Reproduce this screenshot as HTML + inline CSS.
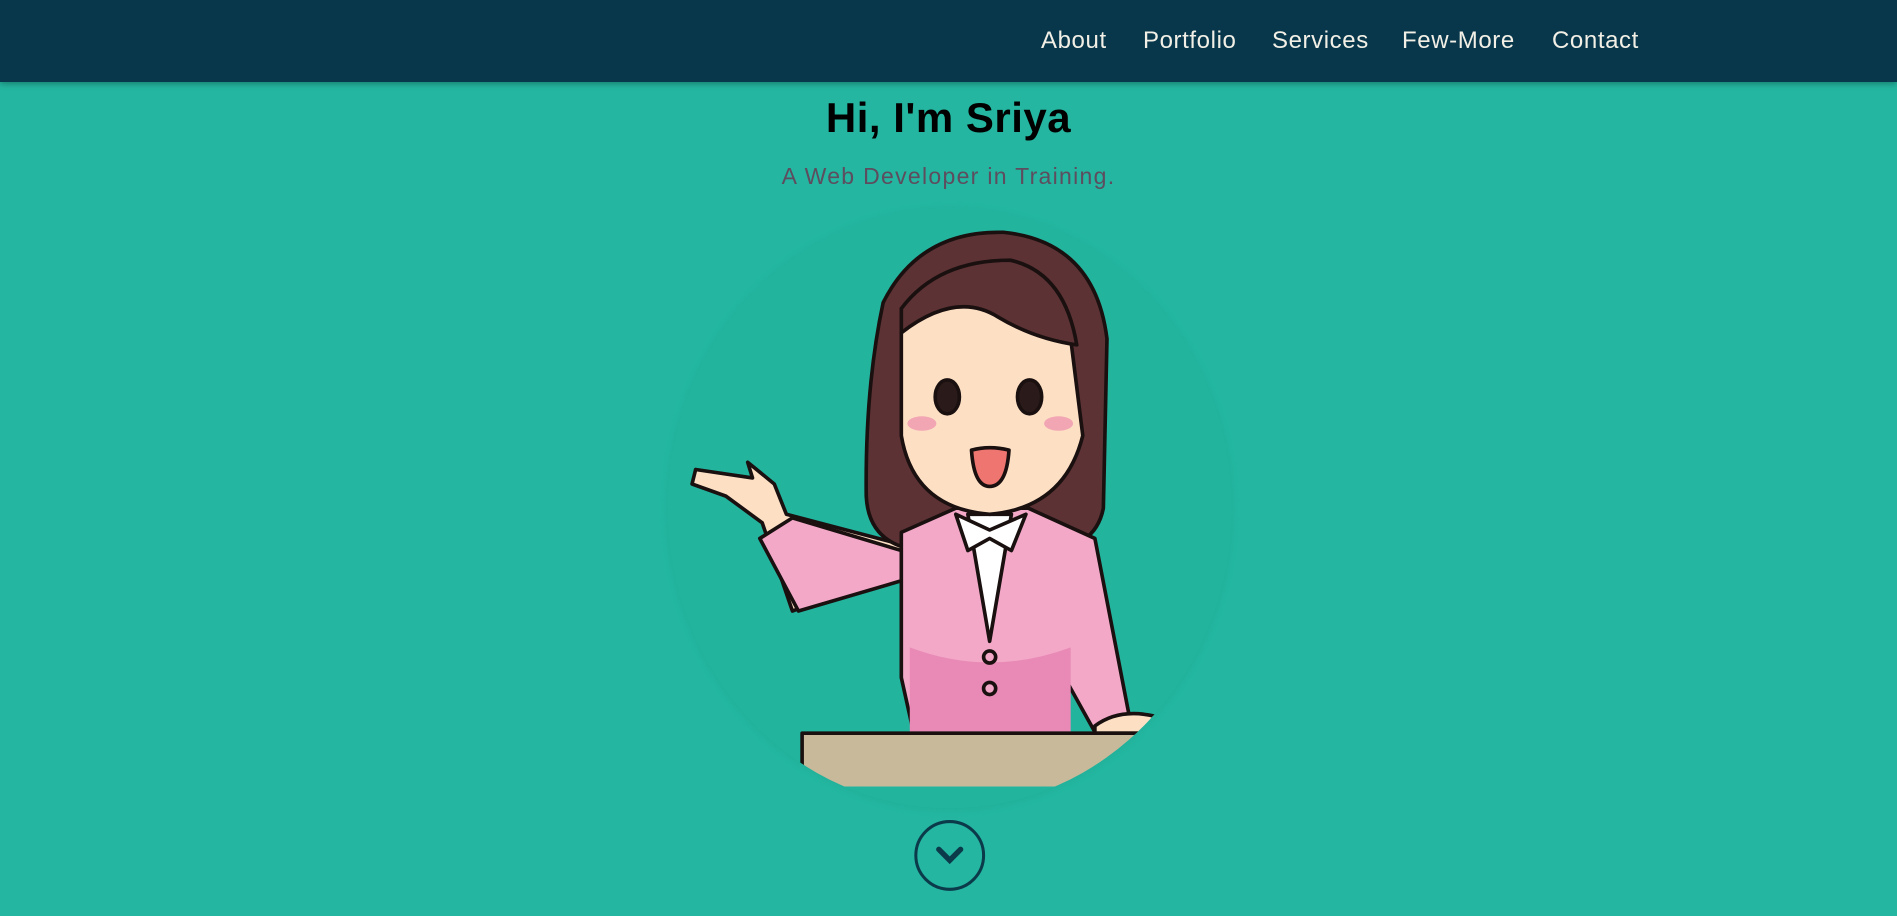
<!DOCTYPE html>
<html><head><meta charset="utf-8"><style>
body{margin:0;width:1897px;height:916px;background:#24b6a0;overflow:hidden;font-family:"Liberation Sans",sans-serif;position:relative}
nav{position:absolute;left:0;top:0;width:1897px;height:82px;background:#08364b;box-shadow:0 2px 6px rgba(0,0,0,.3);z-index:2}
nav a{position:absolute;top:27px;color:#f2f0e6;font-size:24px;letter-spacing:0.6px;text-decoration:none}
h1{position:absolute;top:94px;left:0;width:1897px;text-align:center;margin:0;font-size:42px;font-weight:bold;color:#000;letter-spacing:0.5px}
p{position:absolute;top:163px;left:0;width:1897px;text-align:center;margin:0;font-size:23px;color:#5d4d5e;letter-spacing:1.3px}
svg{position:absolute;left:0;top:0}
</style></head><body>
<svg width="1897" height="916" viewBox="0 0 1568 757">
<defs><clipPath id="c"><ellipse cx="785" cy="420" rx="233" ry="248"/></clipPath>
<clipPath id="r"><rect x="0" y="0" width="1568" height="650"/></clipPath>
<filter id="s"><feGaussianBlur stdDeviation="3"/></filter></defs>
<ellipse cx="785" cy="421" rx="234" ry="249" fill="#1fa993" opacity=".4" filter="url(#s)"/>
<ellipse cx="785" cy="420" rx="233" ry="248" fill="#23b49e"/>
<g clip-path="url(#r)"><g clip-path="url(#c)" stroke="#1a1010" stroke-width="3" stroke-linejoin="round">
<path d="M745 450 L650 425 L640 400 L618 382 L622 395 L575 388 L572 400 L600 410 L630 432 L655 505 L745 470 Z" fill="#fde0c4"/>
<path d="M745 455 L655 428 L628 445 L660 505 L745 480 Z" fill="#f3a8c8"/>
<path d="M730 250 Q760 190 830 192 Q905 200 915 280 L912 420 Q905 455 860 455 L760 455 Q718 450 716 410 Q715 320 730 250 Z" fill="#5c3234"/>
<path d="M745 440 L790 420 L850 420 L905 445 L935 600 L905 605 L880 560 L880 605 L755 605 L745 560 Z" fill="#f3a8c8"/>
<path d="M752 535 Q818 560 885 535 L885 605 L752 605 Z" fill="#e88ab5" stroke="none"/>
<path d="M800 425 L818 530 L836 425 Z" fill="#fff"/>
<path d="M790 425 L800 455 L818 445 L836 455 L848 425 L818 438 Z" fill="#fff"/>
<path d="M745 255 Q780 230 830 262 Q850 275 885 280 L895 360 Q880 420 818 425 Q755 420 745 360 Z" fill="#fde0c4"/>
<path d="M745 255 Q775 215 835 215 Q880 225 890 285 Q855 280 825 262 Q790 240 745 275 Z" fill="#5c3234"/>
<ellipse cx="783" cy="328" rx="10" ry="14" fill="#2b1a1a"/><ellipse cx="851" cy="328" rx="10" ry="14" fill="#2b1a1a"/>
<ellipse cx="762" cy="350" rx="12" ry="6" fill="#f2a6b4" stroke="none"/><ellipse cx="875" cy="350" rx="12" ry="6" fill="#f2a6b4" stroke="none"/>
<path d="M803 372 Q818 368 834 372 Q832 402 818 402 Q805 402 803 372 Z" fill="#ef7570"/>
<circle cx="818" cy="543" r="5" fill="#f3a8c8"/><circle cx="818" cy="569" r="5" fill="#f3a8c8"/>
<path d="M905 600 Q925 585 955 592 L955 606 L905 606 Z" fill="#fde0c4"/>
<rect x="663" y="606" width="300" height="60" fill="#c8b99a"/>
</g></g>
<circle cx="785" cy="707" r="28" fill="none" stroke="#0b3a4a" stroke-width="2.5"/>
<path d="M776 702 L785 711 L794 702" fill="none" stroke="#0b3a4a" stroke-width="4.5" stroke-linecap="round"/>
</svg>
<nav><a style="left:1041px">About</a><a style="left:1143px">Portfolio</a><a style="left:1272px">Services</a><a style="left:1402px">Few-More</a><a style="left:1552px">Contact</a></nav>
<h1>Hi, I'm Sriya</h1>
<p>A Web Developer in Training.</p>
</body></html>
